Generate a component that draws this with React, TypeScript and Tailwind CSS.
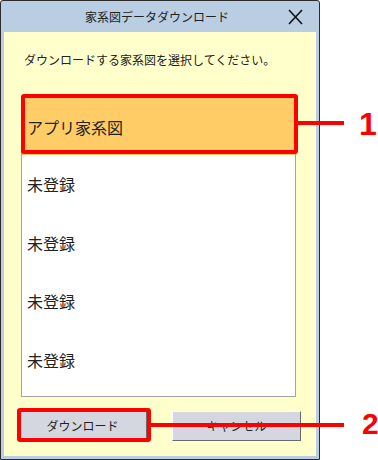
import React from 'react';

const items = ['アプリ家系図', '未登録', '未登録', '未登録', '未登録'];

const jp = { fontFamily: '"Noto Sans CJK JP", "Noto Sans", sans-serif' };

const App = () => {
  return (
    <div className="relative w-[378px] h-[460px] bg-white overflow-hidden" style={jp}>
      {/* dialog window */}
      <div className="w-[320px] h-[460px] border border-[#2b2b2b] rounded-t-[3px] bg-[#b9cde3] flex flex-col">
        <div className="h-[31px] flex items-center pl-[84px] pr-[16px]">
          <span className="text-[12px] text-[#222] leading-none">家系図データダウンロード</span>
          <svg className="ml-auto" width="15" height="16" viewBox="0 0 15 16">
            <path d="M1 1 L14 15 M14 1 L1 15" stroke="#111" strokeWidth="1.6" fill="none" />
          </svg>
        </div>

        <div className="mx-[3px] mb-[3px] flex-1 bg-[#ffffcc] flex flex-col">
          <p className="pt-[19px] pl-[20px] text-[12px] leading-[18px] text-[#222]">
            ダウンロードする家系図を選択してください。
          </p>

          <div className="mt-[28px] ml-[17px] w-[275px] h-[300px] border border-[#a3a3a3] bg-white">
            {items.map((name, i) => (
              <div
                key={i}
                className={
                  i === 0
                    ? 'h-[57px] flex items-center pl-[5px] bg-[#ffcc66] text-[16px] text-[#222]'
                    : 'h-[58.5px] flex items-center pl-[5px] text-[16px] text-[#222]'
                }
              >
                {name}
              </div>
            ))}
          </div>

          <div className="mt-[14px] ml-[14px] flex gap-[25px]">
            <button className="w-[129px] h-[30px] bg-[#d4d7df] border border-t-white border-l-white border-r-[#6a6a6a] border-b-[#6a6a6a] text-[12px] text-[#222]">
              ダウンロード
            </button>
            <button className="w-[129px] h-[30px] bg-[#d4d7df] border border-t-white border-l-white border-r-[#6a6a6a] border-b-[#6a6a6a] text-[12px] text-[#222]">
              キャンセル
            </button>
          </div>
        </div>
      </div>

      {/* red callouts */}
      <div className="absolute left-[21px] top-[94px] w-[277px] h-[60px] border-4 border-[#ff0000] rounded-[3px]" />
      <div className="absolute left-[298px] top-[121px] w-[46px] h-[4px] bg-[#ff0000]" />
      <span
        className="absolute left-[359px] top-[108px] text-[32px] leading-none font-bold text-[#ff0000]"
        style={{ fontFamily: '"Liberation Sans", Arial, sans-serif' }}
      >
        1
      </span>

      <div className="absolute left-[17px] top-[408px] w-[134px] h-[34px] border-4 border-[#ff0000] rounded-[3px]" />
      <div className="absolute left-[151px] top-[423px] w-[193px] h-[4px] bg-[#ff0000]" />
      <span
        className="absolute left-[362px] top-[409px] text-[30px] leading-none font-bold tracking-[-3px] text-[#ff0000]"
        style={{ fontFamily: '"Liberation Sans", Arial, sans-serif' }}
      >
        2
      </span>
    </div>
  );
};

export default App;
